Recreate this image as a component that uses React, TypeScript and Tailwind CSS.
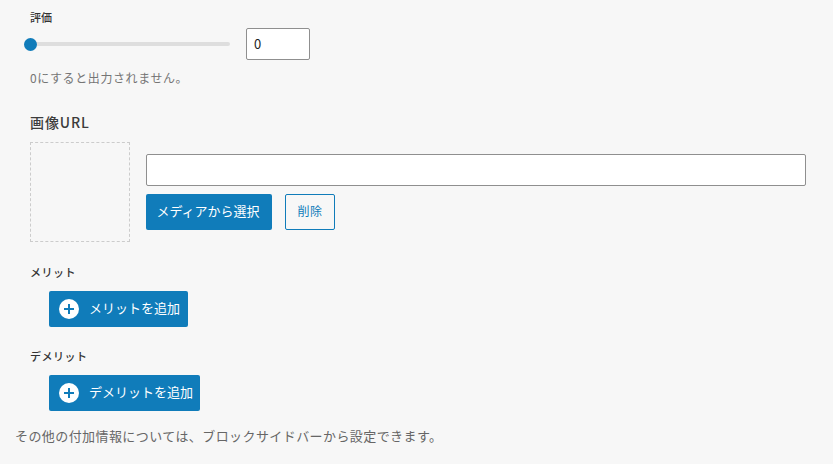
const Plus = () => (
  <svg width="20" height="20" viewBox="0 0 20 20">
    <circle cx="10" cy="10" r="10" fill="#fff" />
    <path d="M10 5v10M5 10h10" stroke="#107cba" strokeWidth="2" />
  </svg>
);

export default function App() {
  return (
    <div className="w-[833px] h-[464px] overflow-hidden bg-[#f7f7f7] text-[#32373c] font-['Noto_Sans_CJK_JP','Noto_Sans',sans-serif]">
      <div className="pl-[30px] pt-[10px]">
        <div className="text-[11px] leading-[14px] font-medium text-[#333]">評価</div>
        <div className="flex items-center mt-[3px] h-[33px] -ml-[6px]">
          <div className="relative w-[206px] h-[4px] rounded-full bg-[#dedede]">
            <div className="absolute left-0 top-[-4px] w-[13px] h-[13px] rounded-full bg-[#107cba]" />
          </div>
          <div className="ml-[16px] w-[64px] h-[32px] border border-[#8f8f8f] bg-white rounded-[2px] pl-[7px] text-[13px] leading-[30px] text-[#1e1e1e]">0</div>
        </div>
        <div className="mt-[9px] text-[12px] leading-[18px] tracking-[0.6px] text-[#757575]">0にすると出力されません。</div>
        <div className="mt-[25px] text-[14px] leading-[20px] font-medium tracking-[0.9px] text-[#3c3c3c]">画像URL</div>
        <div className="flex items-start mt-[10px]">
          <div className="w-[100px] h-[100px] border border-dashed border-[#cccccc]" />
          <div className="ml-[16px] mt-[12px] flex flex-col">
            <div className="w-[660px] h-[32px] border border-[#8f8f8f] bg-white rounded-[2px]" />
            <div className="flex mt-[8px]">
              <div className="h-[36px] w-[126px] pr-[2px] pb-[2px] bg-[#107cba] text-white rounded-[2px] text-[13px] flex items-center justify-center">メディアから選択</div>
              <div className="ml-[13px] h-[36px] w-[50px] pb-[2px] border border-[#107cba] text-[#107cba] rounded-[2px] text-[12px] tracking-[0.5px] flex items-center justify-center">削除</div>
            </div>
          </div>
        </div>
        <div className="mt-[22px] text-[11px] leading-[16px] font-medium tracking-[0.5px] text-[#333]">メリット</div>
        <div className="ml-[19px] mt-[11px] w-[139px] h-[36px] pb-[2px] bg-[#107cba] rounded-[2px] flex items-center text-white text-[13px] pl-[10px]">
          <div className="mt-[2px]"><Plus /></div>
          <span className="ml-[10px]">メリットを追加</span>
        </div>
        <div className="mt-[21px] text-[11px] leading-[16px] font-medium tracking-[0.5px] text-[#333]">デメリット</div>
        <div className="ml-[19px] mt-[11px] w-[151px] h-[36px] pb-[2px] bg-[#107cba] rounded-[2px] flex items-center text-white text-[13px] pl-[10px]">
          <div className="mt-[2px]"><Plus /></div>
          <span className="ml-[10px]">デメリットを追加</span>
        </div>
      </div>
      <div className="pl-[15px] mt-[16px] text-[13px] leading-[18px] tracking-[0.42px] text-[#666]">その他の付加情報については、ブロックサイドバーから設定できます。</div>
    </div>
  );
}
